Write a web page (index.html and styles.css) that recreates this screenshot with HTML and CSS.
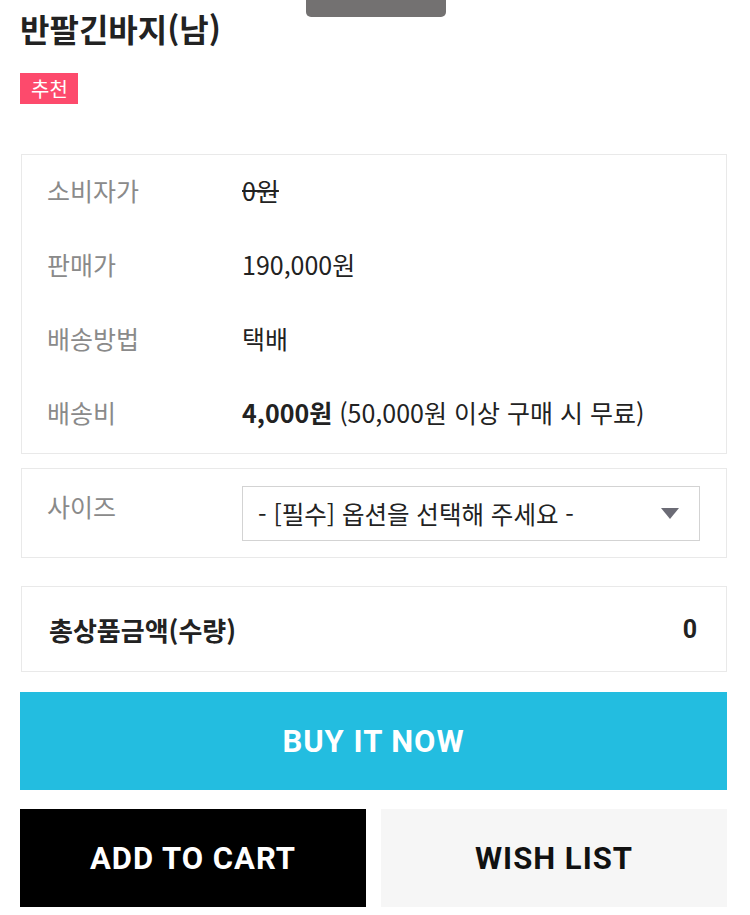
FILE: index.html
```html
<!DOCTYPE html>
<html lang="ko">
<head>
<meta charset="utf-8">
<title>반팔긴바지(남)</title>
<link rel="stylesheet" href="styles.css">
</head>
<body>
<div class="handle"></div>
<main class="page">
  <h1 class="title">반팔긴바지(남)</h1>
  <div class="badges"><span class="badge">추천</span></div>

  <section class="box info">
    <div class="row"><span class="label">소비자가</span><span class="value strike">0원</span></div>
    <div class="row"><span class="label">판매가</span><span class="value">190,000원</span></div>
    <div class="row"><span class="label">배송방법</span><span class="value">택배</span></div>
    <div class="row"><span class="label">배송비</span><span class="value"><strong>4,000원</strong> (50,000원 이상 구매 시 무료)</span></div>
  </section>

  <section class="box option">
    <span class="label opt-label">사이즈</span>
    <div class="select">
      <span class="select-text">- [필수] 옵션을 선택해 주세요 -</span>
      <span class="arrow"></span>
    </div>
  </section>

  <section class="box total">
    <span class="total-label">총상품금액(수량)</span>
    <span class="total-value">0</span>
  </section>

  <button class="btn buy">BUY IT NOW</button>
  <div class="btn-row">
    <button class="btn cart">ADD TO CART</button>
    <button class="btn wish">WISH LIST</button>
  </div>
</main>
</body>
</html>
```

FILE: styles.css
```css
* { box-sizing: border-box; }
html, body { margin: 0; padding: 0; background: #fff; }
body {
  font-family: "Noto Sans CJK KR", "Noto Sans", sans-serif;
  color: #222;
  width: 750px;
  position: relative;
}
.handle {
  position: absolute;
  left: 306px;
  top: 0;
  width: 140px;
  height: 17px;
  background: #737171;
  border-radius: 0 0 5px 5px;
}
.page {
  padding: 0 23px 0 20px;
  display: flex;
  flex-direction: column;
}
.title {
  margin: 6px 0 0 0;
  font-size: 32px;
  line-height: 44px;
  font-weight: 700;
  color: #222;
}
.badges {
  margin-top: 23px;
  display: flex;
}
.badge {
  background: #fd4a6c;
  color: #fff;
  font-size: 20px;
  line-height: 31px;
  height: 31px;
  padding: 0 10px 0 11px;
}
.box {
  border: 1px solid #e9e9e9;
  margin-left: 1px;
}
.info {
  margin-top: 50px;
  padding: 0 20px 2px 25px;
}
.row {
  height: 74px;
  display: flex;
  align-items: center;
  padding-bottom: 4px;
  font-size: 25px;
}
.label {
  width: 195px;
  flex: none;
  color: #8a8a8a;
  font-size: 25px;
}
.value { color: #222; }
.value strong { font-weight: 700; }
.strike { text-decoration: line-through; }
.option {
  margin-top: 14px;
  padding: 17px 26px 16px 25px;
  display: flex;
  align-items: flex-start;
}
.opt-label { line-height: 40px; }
.select {
  flex: 1;
  height: 55px;
  border: 1px solid #d3d3d3;
  display: flex;
  align-items: center;
  justify-content: space-between;
  padding: 0 20px 0 15px;
}
.select-text {
  font-size: 24.5px;
  color: #222;
}
.arrow {
  width: 0;
  height: 0;
  border-left: 9px solid transparent;
  border-right: 9px solid transparent;
  border-top: 11px solid #6b6b75;
}
.total {
  margin-top: 28px;
  height: 86px;
  padding: 0 29px 0 27px;
  display: flex;
  align-items: center;
  justify-content: space-between;
  font-weight: 700;
  font-size: 26px;
}
.total-value { font-family: Roboto, "Noto Sans", sans-serif; font-size: 25px; }
.btn {
  border: none;
  margin: 0;
  height: 98px;
  font-family: Roboto, "Noto Sans", sans-serif;
  font-weight: 700;
  font-size: 31px;
  letter-spacing: 1px;
  cursor: pointer;
}
.buy {
  margin-top: 20px;
  background: #23bde0;
  color: #fff;
  width: 100%;
}
.btn-row {
  margin-top: 19px;
  display: grid;
  grid-template-columns: 1fr 1fr;
  gap: 15px;
}
.cart { background: #000; color: #fff; }
.wish { background: #f6f6f6; color: #111; }
```
